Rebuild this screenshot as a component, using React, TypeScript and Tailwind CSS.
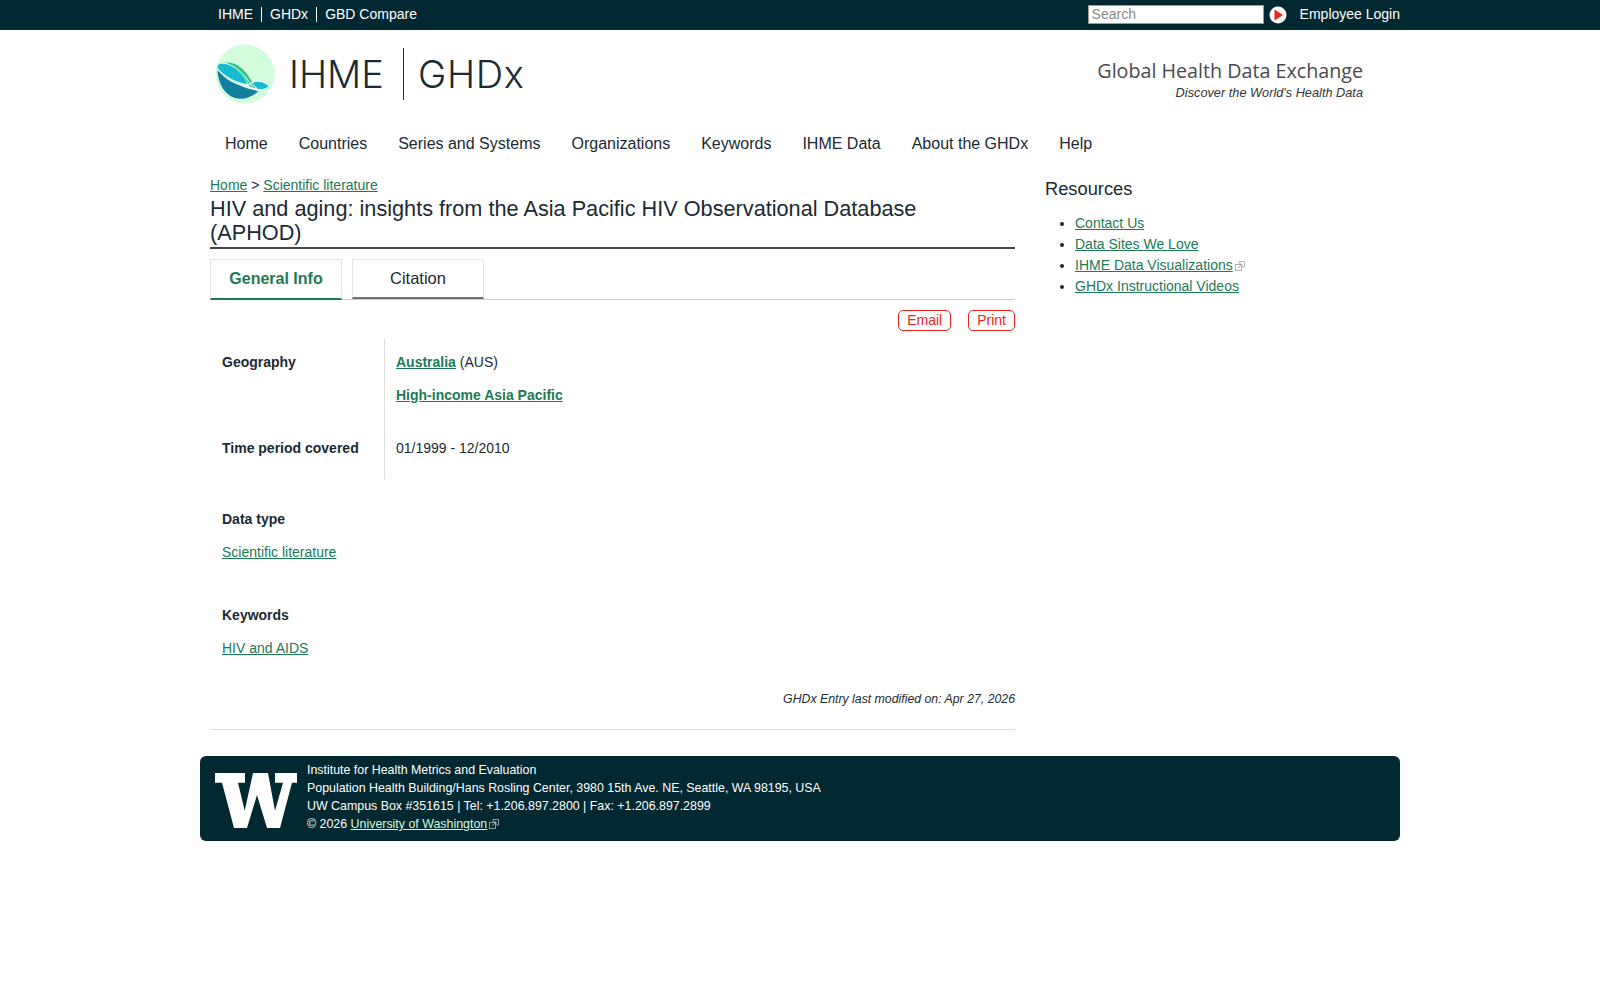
import React from 'react';

const ExtIcon = ({ color = '#a8adb3' }: { color?: string }) => (
  <svg viewBox="0 0 10 10" className="inline-block w-[10px] h-[10px] ml-[2px] align-[-1px]" fill="none" stroke={color} strokeWidth="0.9">
    <rect x="0.5" y="3.5" width="6" height="6" />
    <path d="M4 0.5 H9.5 V6 H7 M4 0.5 V3 M3 7 L7 3 M5 3 H7 V5" />
  </svg>
);

const Logo = () => (
  <svg viewBox="0 0 60 60" className="w-[60px] h-[60px] shrink-0">
    <circle cx="30" cy="30" r="29.5" fill="#d3fcdc" />
    {/* bowl */}
    <path d="M2.5 26 C3 40 10 51 20 54 C28 56.5 38 53 44 46.5 C36 46 30 44 24 41 C15 37 8 32 2.5 26 Z" fill="#127f9f" />
    {/* cyan wave */}
    <path d="M2.5 24 C2 19 8 19.5 13 20.5 C21 23 28 31 32.5 40 C24 39.5 10 33 2.5 24 Z" fill="#17bad0" />
    {/* green wave */}
    <path d="M9 19 C20 16 31 26 37 38 L33.5 40 C28 30 20 22 9 19 Z" fill="#2bc48a" />
    {/* right fin */}
    <path d="M37 39 C43 36 49 38 54 42 C50 45 46 45.5 43 45 C41 43 39 41 37 39 Z" fill="#17bad0" />
    <path d="M33.5 41.5 L37 40 L41 44.5 C38 44.5 36 43.5 33.5 41.5 Z" fill="#17bad0" />
    <path d="M2.5 25 C9 34 19 40.5 31 42 C36 43 40 46 43 47 M9 19 C21 21 31 32 36 41 C38 44 41 46 45 46 M36 39 C42 36 49 37 54 42" fill="none" stroke="#fff" strokeWidth="0.9" />
  </svg>
);

const UwLogo = () => (
  <svg viewBox="0 0 82 55" className="w-[82px] h-[55px] shrink-0" fill="#fff">
    <path d="M0 0 H30 V9.7 H23 L29.7 37.7 L38 0 H53 L60 37.7 L68 9.7 H60 V0 H82 V9.7 H77 L65 55 H52 L42 22 L32 55 H19 L7 9.7 H0 Z" />
  </svg>
);

const Tab = ({ label, active }: { label: string; active?: boolean }) => (
  <div
    className={
      active
        ? 'w-[132px] h-[41px] flex items-center justify-center border border-[#e5e5e5] border-b-2 border-b-[#1c7a57] text-[#1c7a57] font-bold text-[16px] -mb-px'
        : 'w-[132px] h-[40px] flex items-center justify-center border border-[#e5e5e5] border-b-2 border-b-[#6b7280] text-[#1b2a33] text-[16.5px]'
    }
  >
    {label}
  </div>
);

export default function App() {
  return (
    <div className="min-h-[1000px] bg-white text-[#1b2a33] font-['Liberation_Sans',Arial,sans-serif]">
      {/* top strip */}
      <div className="h-[30px] bg-[#022831]">
        <div className="w-[1200px] mx-auto pl-[18px] pb-[1px] flex items-center h-full text-[14px] text-white">
          <span className="pr-[8px] leading-[15px]">IHME</span>
          <span className="px-[8px] border-l border-white leading-[15px]">GHDx</span>
          <span className="px-[8px] border-l border-white leading-[15px]">GBD Compare</span>
          <div className="ml-auto flex items-center">
            <div className="w-[176px] h-[19px] bg-white border border-[#9a9a9a] px-[3px] text-[14px] leading-[16px] text-[#8a8a8a]">Search</div>
            <svg viewBox="0 0 18 18" className="w-[18px] h-[18px] ml-[5px]">
              <circle cx="9" cy="9" r="8.5" fill="#fff" />
              <path d="M5.5 3.5 L14 9 L5.5 14.5 Z" fill="#e8261c" />
            </svg>
            <span className="ml-[13px] leading-[15px]">Employee Login</span>
          </div>
        </div>
      </div>

      {/* logo row */}
      <div className="w-[1200px] mx-auto flex justify-between h-[92px]">
        <div className="flex items-center pl-[15px] pb-[6px] pt-[1px]">
          <Logo />
          <span className="ml-[14px] text-[38px] font-light font-['Inter'] text-[#1b2a33] relative top-[1px]">IHME</span>
          <span className="ml-[19px] w-px h-[52px] bg-[#1b2a33]" />
          <span className="ml-[14px] text-[38px] font-light font-['Inter'] tracking-[0.7px] text-[#1b2a33] relative top-[1px]">GHDx</span>
        </div>
        <div className="pr-[37px] pt-[29px] text-right">
          <div className="text-[19.7px] leading-[24px] text-[#4a4a4a] font-['Open_Sans']">Global Health Data Exchange</div>
          <div className="text-[12.75px] italic leading-[20px] text-[#333]">Discover the World's Health Data</div>
        </div>
      </div>

      {/* nav */}
      <div className="w-[1200px] mx-auto pl-[25px] flex gap-[31px] text-[16px] h-[43px] items-center">
        {['Home', 'Countries', 'Series and Systems', 'Organizations', 'Keywords', 'IHME Data', 'About the GHDx', 'Help'].map(n => (
          <span key={n}>{n}</span>
        ))}
      </div>

      <div className="w-[1200px] mx-auto flex pl-[10px]">
        {/* main */}
        <div className="w-[805px]">
          <div className="mt-[10px] text-[14px] leading-[20px]">
            <a className="text-[#1c7a57] underline">Home</a> &gt; <a className="text-[#1c7a57] underline">Scientific literature</a>
          </div>
          <h1 className="text-[21.7px] leading-[23.5px] mt-[2px] pb-[3px] pr-[20px] border-b-2 border-[#444]">
            HIV and aging: insights from the Asia Pacific HIV Observational Database (APHOD)
          </h1>
          <div className="flex gap-[10px] mt-[10px] border-b border-[#ccc]">
            <Tab label="General Info" active />
            <Tab label="Citation" />
          </div>
          <div className="flex justify-end gap-[17px] mt-[10px] text-[14px] text-[#e8261c]">
            <span className="border border-[#e8261c] rounded-[5px] px-[8px] leading-[19px]">Email</span>
            <span className="border border-[#e8261c] rounded-[5px] px-[8px] leading-[19px]">Print</span>
          </div>

          <div className="mt-[8px] text-[14px]">
            <div className="flex">
              <div className="w-[175px] pl-[12px] border-r border-[#ddd]">
                <div className="pt-[14px] font-bold leading-[18px] h-[87px]">Geography</div>
                <div className="pt-[13px] font-bold leading-[18px] h-[53px]">Time period covered</div>
              </div>
              <div className="pl-[11px]">
                <div className="pt-[14px] leading-[18px]"><a className="font-bold text-[#1c7a57] underline">Australia</a> (AUS)</div>
                <div className="pt-[15px] leading-[18px] h-[55px]"><a className="font-bold text-[#1c7a57] underline">High-income Asia Pacific</a></div>
                <div className="pt-[13px] leading-[18px]">01/1999 - 12/2010</div>
              </div>
            </div>
            <div className="pl-[12px] mt-[31px] font-bold leading-[18px]">Data type</div>
            <div className="pl-[12px] mt-[15px] leading-[18px]"><a className="text-[#1c7a57] underline">Scientific literature</a></div>
            <div className="pl-[12px] mt-[45px] font-bold leading-[18px]">Keywords</div>
            <div className="pl-[12px] mt-[15px] leading-[18px]"><a className="text-[#1c7a57] underline">HIV and AIDS</a></div>
          </div>
          <div className="mt-[33px] text-right italic text-[12.3px] leading-[18px]">GHDx Entry last modified on: Apr 27, 2026</div>
          <div className="mt-[21px] border-b border-[#ddd]" />
        </div>

        {/* sidebar */}
        <div className="ml-[30px]">
          <div className="mt-[13px] text-[18.3px] leading-[22px]">Resources</div>
          <ul className="mt-[13px] pl-[30px] list-disc text-[14px] leading-[21px]">
            <li><a className="text-[#1c7a57] underline">Contact Us</a></li>
            <li><a className="text-[#1c7a57] underline">Data Sites We Love</a></li>
            <li><a className="text-[#1c7a57] underline">IHME Data Visualizations</a><ExtIcon /></li>
            <li><a className="text-[#1c7a57] underline">GHDx Instructional Videos</a></li>
          </ul>
        </div>
      </div>

      {/* footer */}
      <div className="w-[1200px] mx-auto mt-[26px] h-[85px] bg-[#022831] rounded-[6px] flex items-center text-white text-[12.4px] leading-[18px]">
        <div className="ml-[15px] mr-[10px] pt-[4px]"><UwLogo /></div>
        <div className="pb-[3px]">
          <div>Institute for Health Metrics and Evaluation</div>
          <div>Population Health Building/Hans Rosling Center, 3980 15th Ave. NE, Seattle, WA 98195, USA</div>
          <div>UW Campus Box #351615 | Tel: +1.206.897.2800 | Fax: +1.206.897.2899</div>
          <div>© 2026 <a className="underline text-[#d3fcdc]">University of Washington</a><ExtIcon /></div>
        </div>
      </div>
    </div>
  );
}
